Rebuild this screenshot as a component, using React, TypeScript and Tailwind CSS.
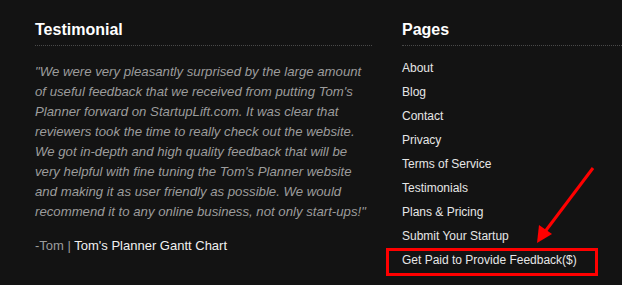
import React from "react";

const pages = [
  "About",
  "Blog",
  "Contact",
  "Privacy",
  "Terms of Service",
  "Testimonials",
  "Plans & Pricing",
  "Submit Your Startup",
  "Get Paid to Provide Feedback($)",
];

const quoteLines = [
  "\"We were very pleasantly surprised by the large amount",
  "of useful feedback that we received from putting Tom's",
  "Planner forward on StartupLift.com. It was clear that",
  "reviewers took the time to really check out the website.",
  "We got in-depth and high quality feedback that will be",
  "very helpful with fine tuning the Tom's Planner website",
  "and making it as user friendly as possible. We would",
  "recommend it to any online business, not only start-ups!\"",
];

export default function App() {
  return (
    <div
      className="relative flex h-[285px] w-[622px] overflow-hidden bg-[#131313] pl-[35px] pt-[20px]"
      style={{ fontFamily: '"Liberation Sans", Arial, sans-serif' }}
    >
      {/* testimonial column */}
      <div className="w-[337px] shrink-0">
        <h3 className="border-b border-dotted border-[#4a4a4a] pb-[5px] text-[16px] font-bold leading-[20px] text-white">
          Testimonial
        </h3>
        <p className="mt-[16px] whitespace-nowrap text-[13.2px] italic leading-[20px] text-[#9c9c9c]">
          {quoteLines.map((l) => (
            <span key={l} className="block">
              {l}
            </span>
          ))}
        </p>
        <p className="mt-[14px] text-[13px] leading-[20px] text-[#9c9c9c]">
          -Tom | <a className="text-[#f0f0f0]">Tom's Planner Gantt Chart</a>
        </p>
      </div>

      {/* pages column */}
      <div className="ml-[30px] flex-1">
        <h3 className="border-b border-dotted border-[#4a4a4a] pb-[5px] text-[16px] font-bold leading-[20px] text-white">
          Pages
        </h3>
        <ul className="mt-[10px]">
          {pages.map((p) => (
            <li key={p} className="text-[12px] leading-[24px] text-[#e6e6e6]">
              {p}
            </li>
          ))}
        </ul>
      </div>

      {/* annotation overlay */}
      <div className="absolute left-[386px] top-[248px] h-[28px] w-[212px] border-[3px] border-[#ff0000]" />
      <svg
        className="absolute left-0 top-0"
        width="622"
        height="285"
        viewBox="0 0 622 285"
      >
        <line x1="593" y1="168" x2="544" y2="233" stroke="#ff0000" strokeWidth="3" />
        <polygon points="537,243 539,225 552,234" fill="#ff0000" />
      </svg>
    </div>
  );
}
